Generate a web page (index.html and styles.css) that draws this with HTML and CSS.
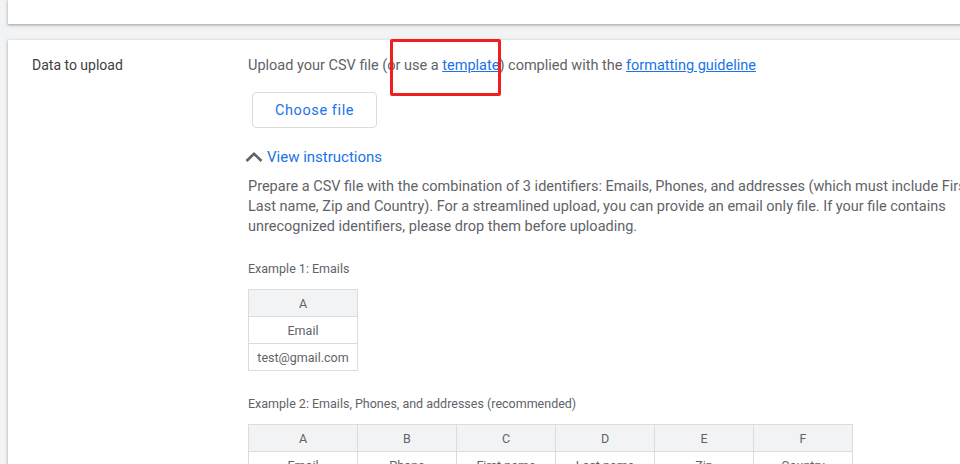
FILE: index.html
```html
<!DOCTYPE html>
<html lang="en">
<head>
  <meta charset="UTF-8" />
  <title>Data to upload</title>
  <link rel="stylesheet" href="styles.css">
</head>
<body>
  <div class="page">
    <div class="card card-top"></div>

    <div class="card">
      <div class="label">Data to upload</div>
      <div class="content">
        <div class="intro">
          Upload your CSV file (or use a <a href="#">template</a>) complied with the <a href="#">formatting guideline</a>
          <span class="marker"></span>
        </div>

        <button class="choose">Choose file</button>

        <div class="toggle">
          <svg width="18" height="10" viewBox="0 0 18 10"><polyline points="1.5,9 9,1.8 16.5,9" fill="none" stroke="#5f6368" stroke-width="2.6"/></svg>
          <a href="#">View instructions</a>
        </div>

        <p class="instructions">Prepare a CSV file with the combination of 3 identifiers: Emails, Phones, and addresses (which must include First name, Last name, Zip and Country). For a streamlined upload, you can provide an email only file. If your file contains unrecognized identifiers, please drop them before uploading.</p>

        <div class="example-title">Example 1: Emails</div>
        <table class="sample one">
          <tr><th>A</th></tr>
          <tr><td>Email</td></tr>
          <tr><td>test@gmail.com</td></tr>
        </table>

        <div class="example-title second">Example 2: Emails, Phones, and addresses (recommended)</div>
        <table class="sample">
          <tr><th class="wide">A</th><th>B</th><th>C</th><th>D</th><th>E</th><th>F</th></tr>
          <tr><td>Email</td><td>Phone</td><td>First name</td><td>Last name</td><td>Zip</td><td>Country</td></tr>
          <tr><td>test@gmail.com</td><td>+1 555 0100</td><td>John</td><td>Doe</td><td>94043</td><td>US</td></tr>
        </table>
      </div>
    </div>
  </div>
</body>
</html>
```

FILE: styles.css
```css
body {
  margin: 0;
  background: #f1f3f4;
  font-family: Roboto, "Liberation Sans", sans-serif;
  color: #3c4043;
  overflow: hidden;
}
.page {
  padding-left: 8px;
  width: 1160px;
}
.card {
  background: #fff;
  box-shadow: 0 1px 2px rgba(60,64,67,0.3), 0 1px 3px 1px rgba(60,64,67,0.15);
}
.card-top {
  height: 24px;
}
.card:not(.card-top) {
  display: flex;
  margin-top: 16px;
  padding: 16px 24px 40px;
}
.label {
  width: 216px;
  flex-shrink: 0;
  font-size: 14px;
  line-height: 20px;
  margin-top: -1px;
}
.content {
  font-size: 14.5px;
  color: #5f6368;
}
.intro {
  position: relative;
  line-height: 20px;
}
a {
  color: #1a73e8;
}
.marker {
  position: absolute;
  left: 142px;
  top: -17px;
  width: 105px;
  height: 51px;
  border: 3px solid #f21d1d;
  border-radius: 2px;
}
.choose {
  display: block;
  margin: 16px 0 0 4px;
  width: 125px;
  height: 36px;
  background: #fff;
  border: 1px solid #dadce0;
  border-radius: 4px;
  color: #1a73e8;
  font-family: Roboto, "Liberation Sans", sans-serif;
  font-size: 14.5px;
  font-weight: 400;
  letter-spacing: 0.6px;
}
.toggle {
  display: flex;
  align-items: center;
  gap: 4px;
  margin: 19px 0 0 -3px;
  font-size: 15px;
  line-height: 20px;
}
.toggle a {
  text-decoration: none;
}
.instructions {
  width: 770px;
  margin: 10px 0 0;
  line-height: 20px;
}
.example-title {
  margin-top: 24px;
  font-size: 12.5px;
  line-height: 16px;
}
.example-title.second {
  margin-top: 25px;
}
.sample {
  border-collapse: collapse;
  margin-top: 12px;
  font-size: 12.5px;
  color: #5f6368;
}
.sample th, .sample td {
  border: 1px solid #dadce0;
  height: 26px;
  padding: 0;
  width: 98px;
  text-align: center;
  font-weight: 400;
}
.sample th {
  background: #f1f3f4;
}
.sample .wide, .sample.one th, .sample.one td {
  width: 108px;
}
```
